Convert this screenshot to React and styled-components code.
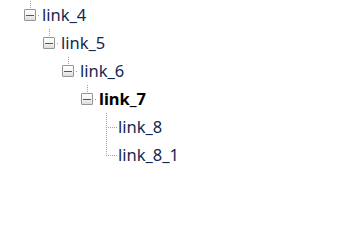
import React from "react";
import styled, { createGlobalStyle } from "styled-components";

const Global = createGlobalStyle`
  html, body { margin: 0; padding: 0; background: #ffffff; }
  body { font-family: "Noto Sans", "Open Sans", sans-serif; }
`;

const Tree = styled.ul`
  list-style: none;
  margin: 0;
  padding: 1px 0 0 0;
  display: flex;
  flex-direction: column;
`;

const Row = styled.li`
  display: flex;
  align-items: stretch;
  height: 28px;
  padding-left: ${(p) => 24 + 19 * p.$level}px;
`;

const Connector = styled.div`
  flex: 0 0 18px;
  display: grid;
  grid-template-columns: ${(p) => (p.$leaf ? "6px 1px 11px" : "12px 6px")};
  grid-template-rows: ${(p) => (p.$leaf ? "14px 1px 13px" : "8px 12px 8px")};
`;

const dotsV = "repeating-linear-gradient(to bottom, #a0a0a0 0 1px, transparent 1px 2px)";
const dotsH = "repeating-linear-gradient(to right, transparent 0 1px, #a0a0a0 1px 2px)";

const StemAbove = styled.span`
  grid-column: 1;
  grid-row: 1;
  width: 1px;
  margin-left: 6px;
  background: ${dotsV};
`;

const Box = styled.span`
  grid-column: 1;
  grid-row: 2;
  box-sizing: border-box;
  border: 1px solid #969696;
  border-radius: 1px;
  background: linear-gradient(to bottom, #ffffff 0%, #f4f4f4 50%, #dcdcdc 100%);
  display: flex;
  align-items: center;
  padding-left: 1px;
  &::after {
    content: "";
    width: 8px;
    height: 1px;
    background: #3b5a94;
  }
`;

const Dot = styled.span`
  grid-column: 2;
  grid-row: 2;
  width: 1px;
  height: 1px;
  margin: 6px 0 0 2px;
  background: #a0a0a0;
`;

const Stem = styled.span`
  grid-column: 2;
  grid-row: ${(p) => (p.$last ? "1 / 3" : "1 / 4")};
  background: ${dotsV};
`;

const Branch = styled.span`
  grid-column: 3;
  grid-row: 2;
  background: ${dotsH};
`;

const Label = styled.span`
  font-size: 16.5px;
  line-height: 28px;
  color: ${(p) => (p.$bold ? "#000000" : "#13274f")};
  font-weight: ${(p) => (p.$bold ? 700 : 400)};
  white-space: nowrap;
`;

const nodes = [
  { label: "link_4", level: 0, expandable: true },
  { label: "link_5", level: 1, expandable: true },
  { label: "link_6", level: 2, expandable: true },
  { label: "link_7", level: 3, expandable: true, bold: true },
  { label: "link_8", level: 4, last: false },
  { label: "link_8_1", level: 4, last: true },
];

export default function App() {
  return (
    <>
      <Global />
      <Tree>
        {nodes.map((n) => (
          <Row key={n.label} $level={n.level}>
            {n.expandable ? (
              <Connector>
                <StemAbove />
                <Box />
                <Dot />
              </Connector>
            ) : (
              <Connector $leaf>
                <Stem $last={n.last} />
                <Branch />
              </Connector>
            )}
            <Label $bold={n.bold}>{n.label}</Label>
          </Row>
        ))}
      </Tree>
    </>
  );
}
